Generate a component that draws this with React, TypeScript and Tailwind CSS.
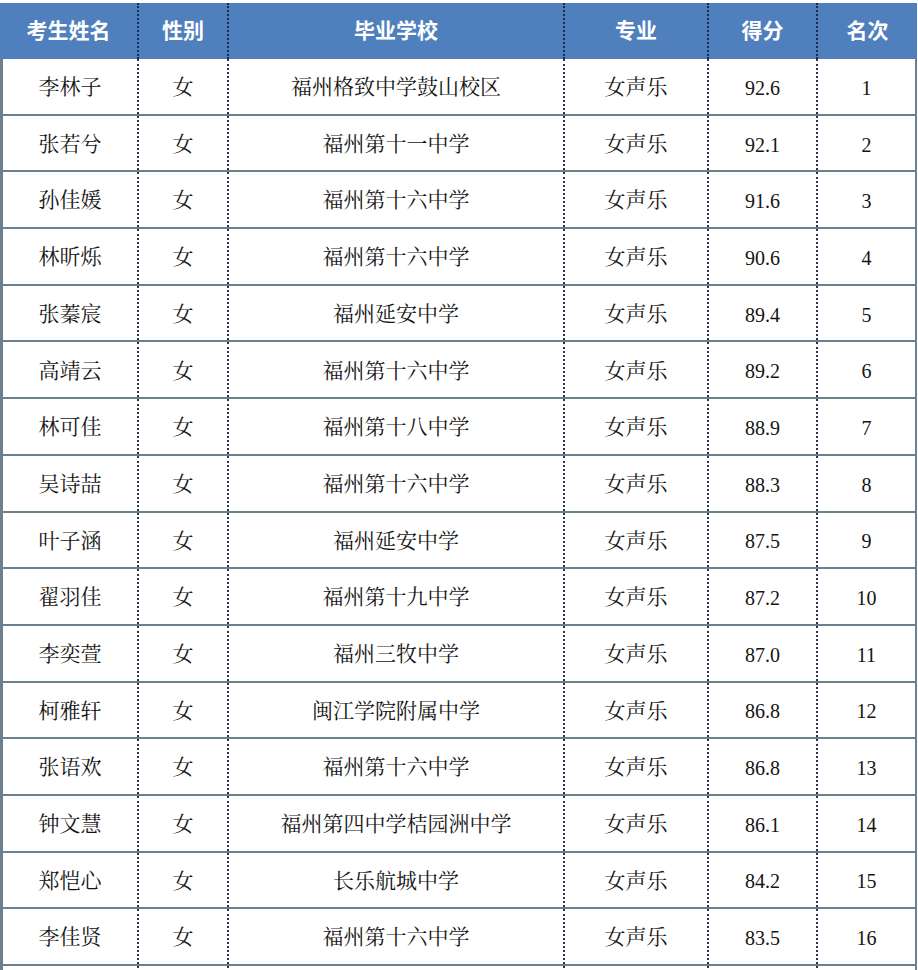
import React from "react";

const rows: [string, string, string, string, string, string][] = [
  ["李林子", "女", "福州格致中学鼓山校区", "女声乐", "92.6", "1"],
  ["张若兮", "女", "福州第十一中学", "女声乐", "92.1", "2"],
  ["孙佳媛", "女", "福州第十六中学", "女声乐", "91.6", "3"],
  ["林昕烁", "女", "福州第十六中学", "女声乐", "90.6", "4"],
  ["张蓁宸", "女", "福州延安中学", "女声乐", "89.4", "5"],
  ["高靖云", "女", "福州第十六中学", "女声乐", "89.2", "6"],
  ["林可佳", "女", "福州第十八中学", "女声乐", "88.9", "7"],
  ["吴诗喆", "女", "福州第十六中学", "女声乐", "88.3", "8"],
  ["叶子涵", "女", "福州延安中学", "女声乐", "87.5", "9"],
  ["翟羽佳", "女", "福州第十九中学", "女声乐", "87.2", "10"],
  ["李奕萱", "女", "福州三牧中学", "女声乐", "87.0", "11"],
  ["柯雅轩", "女", "闽江学院附属中学", "女声乐", "86.8", "12"],
  ["张语欢", "女", "福州第十六中学", "女声乐", "86.8", "13"],
  ["钟文慧", "女", "福州第四中学桔园洲中学", "女声乐", "86.1", "14"],
  ["郑恺心", "女", "长乐航城中学", "女声乐", "84.2", "15"],
  ["李佳贤", "女", "福州第十六中学", "女声乐", "83.5", "16"],
  ["", "", "", "", "", ""],
];

const headers = ["考生姓名", "性别", "毕业学校", "专业", "得分", "名次"];

const bodyFont = {
  fontFamily: '"Liberation Serif", "Noto Serif CJK SC", "Noto Sans CJK SC", serif',
};

export default function App() {
  return (
    <div className="h-[970px] w-[918px] overflow-hidden bg-white pt-[3px]">
      <div className="w-[917px]">
        <div
          className="grid h-[56px] grid-cols-[139px_90px_336px_144px_109px_99px] bg-[#4f80bd] text-[21px] font-bold text-white"
          style={{ fontFamily: '"Noto Sans CJK SC", sans-serif' }}
        >
          {headers.map((h, i) => (
            <div
              key={h}
              className={
                "flex items-center justify-center pb-[2px] " +
                (i < 5 ? "border-r-2 border-dotted border-[#1d2c4d]" : "")
              }
            >
              {h}
            </div>
          ))}
        </div>
        <div className="border-x-[3px] border-r-2 border-[#6d808e]" style={bodyFont}>
          {rows.map((r, ri) => (
            <div
              key={ri}
              className="grid h-[56.7px] grid-cols-[136px_90px_336px_144px_109px_97px] border-b-2 border-[#6d808e] text-[#141414]"
            >
              {r.map((c, ci) => (
                <div
                  key={ci}
                  className={
                    "flex items-center justify-center pt-[3px] " +
                    (ci >= 4 ? "text-[20px] " : "text-[21px] ") +
                    (ci < 5 ? "border-r-2 border-dotted border-[#2a3550]" : "")
                  }
                >
                  {c}
                </div>
              ))}
            </div>
          ))}
        </div>
      </div>
    </div>
  );
}
